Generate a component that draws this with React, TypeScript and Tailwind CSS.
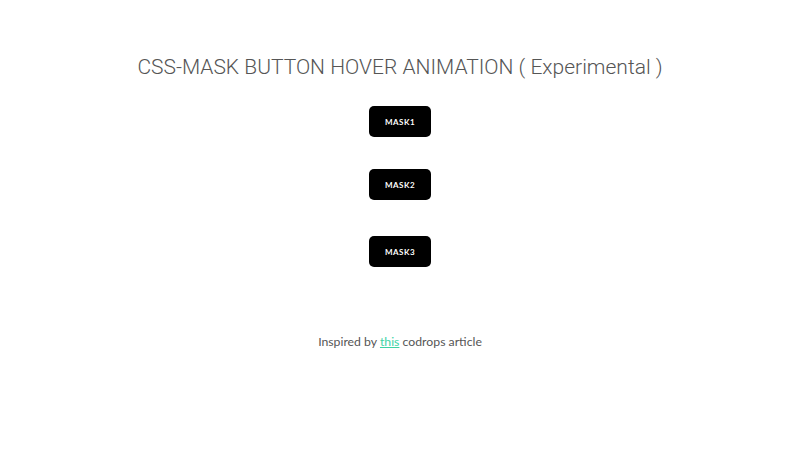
import React from 'react';

const buttons = ['MASK1', 'MASK2', 'MASK3'];

function App() {
  return (
    <div className="min-h-screen w-full bg-white flex flex-col items-center">
      <h1 className="mt-[53px] text-[21px] leading-[28px] font-light text-[#555] font-['Roboto',sans-serif]">
        CSS-MASK BUTTON HOVER ANIMATION ( Experimental )
      </h1>

      <div className="flex flex-col items-center mt-[25px]">
        {buttons.map((label, i) => (
          <button
            key={label}
            className={`w-[62px] h-[31px] rounded-[5px] bg-black text-white text-[8px] font-bold tracking-[0.06em] font-['Lato',sans-serif] ${
              i === 1 ? 'mt-[32px]' : i === 2 ? 'mt-[36px]' : ''
            }`}
          >
            {label}
          </button>
        ))}
      </div>

      <p className="mt-[66px] text-[12.25px] font-normal text-[#555] font-['Lato',sans-serif]">
        Inspired by{' '}
        <a href="#" className="text-[#3dd3a5] underline">
          this
        </a>{' '}
        codrops article
      </p>
    </div>
  );
}

export default App;
